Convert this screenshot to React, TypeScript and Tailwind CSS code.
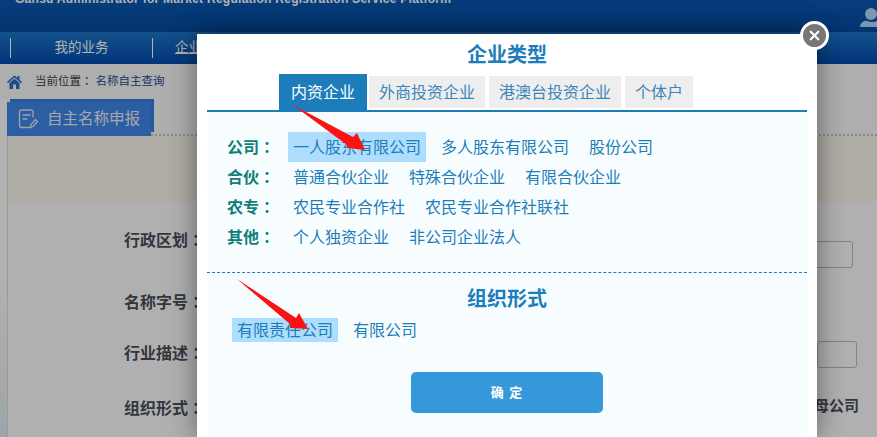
import { X } from 'lucide-react';

const FONT = "font-['Liberation_Sans','Noto_Sans_CJK_SC',sans-serif]";

const tabs = ['外商投资企业', '港澳台投资企业', '个体户'];

const typeRows = [
  { label: '公司', items: ['一人股东有限公司', '多人股东有限公司', '股份公司'] },
  { label: '合伙', items: ['普通合伙企业', '特殊合伙企业', '有限合伙企业'] },
  { label: '农专', items: ['农民专业合作社', '农民专业合作社联社'] },
  { label: '其他', items: ['个人独资企业', '非公司企业法人'] },
];

// 全角コロンを中央に置くため TC を使う
function Colon() {
  return <span className="font-['Noto_Sans_CJK_TC',sans-serif]">：</span>;
}

function HomeIcon() {
  return (
    <svg width="15" height="14" viewBox="0 0 15 14" fill="#2a6cc0">
      <path d="M7.5 0.5 L0 7 L1 8.2 L7.5 2.6 L14 8.2 L15 7 L12.5 4.8 L12.5 1 L10.5 1 L10.5 3 Z" />
      <path d="M2.5 8 L7.5 3.8 L12.5 8 L12.5 14 L9 14 L9 9.5 L6 9.5 L6 14 L2.5 14 Z" />
    </svg>
  );
}

function ReportIcon() {
  return (
    <svg width="20" height="20" viewBox="0 0 20 20" fill="none" stroke="#e8e8e8" strokeWidth="1.3" strokeLinecap="round" strokeLinejoin="round">
      <path d="M12 18.5 H3.5 Q1.5 18.5 1.5 16.5 V3 Q1.5 1 3.5 1 H13 Q15 1 15 3 V8" />
      <path d="M5 6 H12" />
      <path d="M5 10 H9" />
      <path d="M12.5 18.5 L13 15.5 L17.5 10.5 L19.5 12.5 L15 17.5 Z" />
    </svg>
  );
}

function PersonIcon() {
  return (
    <svg className="absolute right-0 top-[8px]" width="17" height="19" viewBox="0 0 17 19" fill="#b0d8ff">
      <circle cx="11" cy="6" r="6" />
      <path d="M0 19 Q0 14 6 12.5 Q11 15 17 13 V19 Z" />
    </svg>
  );
}

function Modal() {
  return (
    <div className="absolute left-[197px] top-[34px] h-[403px] w-[620px] bg-white px-[10px] shadow-[0_0_26px_rgba(0,0,0,0.45)]">
      <h2 className="pt-[6px] text-center text-[20px] font-bold leading-[30px] text-[#1c7dba]">企业类型</h2>

      <div className="mt-[4px] flex h-[36px] items-end pl-[72px]">
        <div className="flex h-[36px] w-[88px] items-center justify-center bg-[#1c7dba] pt-[2px] text-[16px] text-white">内资企业</div>
        {tabs.map((t) => (
          <div key={t} className="mb-[2px] ml-[2px] mr-[2px] flex h-[32px] items-center bg-[#eeeeee] px-[10px] pt-[2px] text-[16px] text-[#3a87bb]">
            {t}
          </div>
        ))}
      </div>

      <div className="h-[325px] border-t-2 border-[#1c7dba] bg-[#f7fdff]">
        <div className="pl-[20px] pt-[20px]">
          {typeRows.map((row, i) => (
            <div key={row.label} className="flex h-[30px] items-center">
              <span className="w-[61px] text-[16px] font-bold text-[#0f7f7a]">
                {row.label}
                <Colon />
              </span>
              {row.items.map((item, j) => (
                <span
                  key={item}
                  className={`mr-[10px] px-[5px] pt-[2px] text-[16px] leading-[28px] text-[#1c7dba] ${i === 0 && j === 0 ? 'bg-[#aeddfe]' : ''}`}
                >
                  {item}
                </span>
              ))}
            </div>
          ))}
        </div>

        <div className="mt-[20px] border-t border-dashed border-[#1c7dba]" />

        <h3 className="pt-[11px] text-center text-[20px] font-bold leading-[30px] text-[#1c7dba]">组织形式</h3>
        <div className="mt-[4px] flex pl-[25px]">
          <span className="mr-[10px] bg-[#aeddfe] px-[5px] pt-[2px] text-[16px] leading-[22px] text-[#1c7dba]">有限责任公司</span>
          <span className="px-[5px] pt-[2px] text-[16px] leading-[22px] text-[#1c7dba]">有限公司</span>
        </div>

        <button className="mx-auto mt-[30px] block h-[41px] w-[192px] rounded-[5px] bg-[#3498db] text-[13px] font-bold tracking-[1px] text-white">
          确 定
        </button>
      </div>

      {/* close */}
      <div className="absolute -right-[12px] -top-[13px] flex h-[29px] w-[29px] items-center justify-center rounded-full border-[3px] border-white bg-[#777777]">
        <X size={15} strokeWidth={3.5} className="text-white" />
      </div>
    </div>
  );
}

export default function App() {
  return (
    <div className={`relative h-[437px] w-[877px] overflow-hidden bg-[#fafafa] ${FONT}`}>
      {/* header */}
      <div className="relative h-[32px] overflow-hidden bg-gradient-to-b from-[#0b58b2] to-[#044aa0]">
        <p className="-mt-[10px] whitespace-nowrap pl-[15px] text-[12px] font-bold leading-[18px] tracking-[0.27px] text-white">
          Gansu Administrator for Market Regulation Registration Service Platform
        </p>
        <PersonIcon />
      </div>

      {/* nav */}
      <div className="flex h-[32px] items-center bg-gradient-to-b from-[#1d75c6] to-[#044cb0] text-[13.5px] text-white">
        <div className="ml-[10px] h-[20px] w-[1px] bg-white" />
        <span className="w-[141px] text-center">我的业务</span>
        <div className="h-[20px] w-[1px] bg-white" />
        <span className="ml-[22px] underline">企业</span>
      </div>

      {/* breadcrumb */}
      <div className="flex h-[35px] items-center bg-[#f9f9f9] pl-[7px] text-[11.5px]">
        <HomeIcon />
        <span className="ml-[13px] text-[#444444]">
          当前位置
          <Colon />
        </span>
        <span className="ml-[3px] text-[#1f4a8f]">名称自主查询</span>
      </div>

      {/* main */}
      <div className="h-[338px] bg-gradient-to-b from-[#ffffff] via-[#ffffff] to-[#e4ecf2] pl-[7px]">
        <div className="relative h-[37px] border-b-2 border-dotted border-[#c4c4c4] bg-[#f9f9f9]">
          <div className="absolute left-[3px] top-0 h-[33px] w-[144px] bg-[#367ce3]" />
          <div className="absolute left-0 top-[3px] flex h-[34px] w-[144px] items-center bg-[#3f87eb] pl-[11px] text-[15.5px] text-[#f0f0f0]">
            <ReportIcon />
            <span className="ml-[9px]">自主名称申报</span>
          </div>
        </div>

        <div className="h-[66px] border-l border-[#dddddd] bg-[#fbf5ec]" />

        <div className="h-[235px] border-l border-[#dddddd] bg-[#fdfdfd] pl-[116px] text-[16px] font-bold text-[#4a4f58]">
          <div className="flex items-start pr-[24px] pt-[25px]">
            <span>
              行政区划
              <Colon />
            </span>
            <div className="ml-auto mt-[14px] h-[27px] w-[40px] rounded-[3px] border border-[#bbbbbb]" />
          </div>
          <div className="mt-[21px]">
            名称字号
            <Colon />
          </div>
          <div className="mt-[26px] flex items-start pr-[20px]">
            <span className="-mt-[1px]">
              行业描述
              <Colon />
            </span>
            <div className="ml-auto h-[27px] w-[40px] rounded-[3px] border border-[#bbbbbb]" />
          </div>
          <div className="mt-[27px] flex justify-between pr-[18px]">
            <span>
              组织形式
              <Colon />
            </span>
            <span className="text-[15px]">母公司</span>
          </div>
        </div>
      </div>

      {/* dim layer */}
      <div className="absolute inset-0 bg-black/30" />

      <Modal />

      {/* red arrows annotated on the screenshot */}
      <svg className="absolute left-0 top-0" width="877" height="437" viewBox="0 0 877 437" fill="#fb1313">
        <polygon points="293,105 353,137 357,133 365,150 347,148 347,145" />
        <polygon points="237,279 296,318 299,313 308,329 290,328 290,324" />
      </svg>
    </div>
  );
}
